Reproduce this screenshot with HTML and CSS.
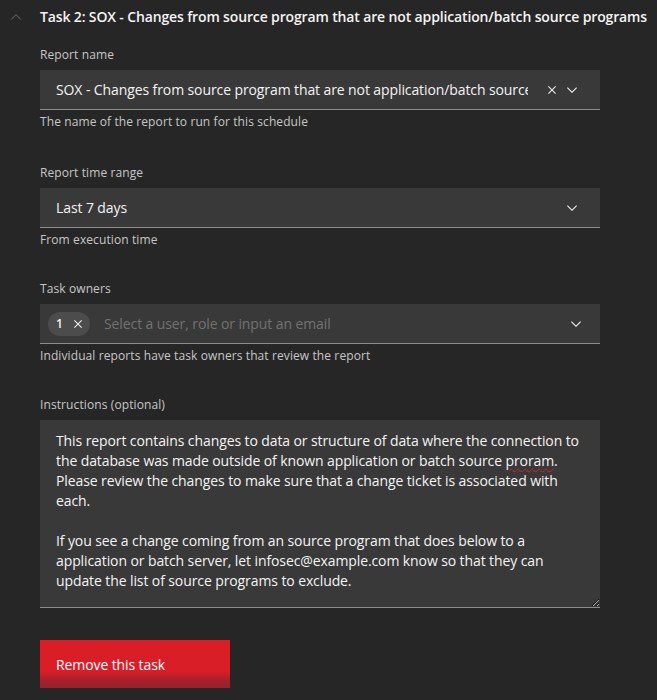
FILE: index.html
```html
<!DOCTYPE html>
<html lang="en">
<head>
<meta charset="utf-8">
<title>Task 2</title>
<link rel="stylesheet" href="styles.css">
</head>
<body>
<section class="accordion">
  <div class="accordion-heading">
    <svg class="accordion-arrow" width="16" height="16" viewBox="0 0 16 16"><path d="M8 5L13 10 12.3 10.7 8 6.4 3.7 10.7 3 10z" fill="currentColor"/></svg>
    <h2 class="accordion-title">Task 2: SOX - Changes from source program that are not application/batch source programs</h2>
  </div>
  <div class="accordion-content">
    <div class="field field-first">
      <div class="label">Report name</div>
      <div class="control select select-clearable">
        <span class="value">SOX - Changes from source program that are not application/batch source programs</span>
        <svg class="icon" width="16" height="16" viewBox="0 0 16 16"><path d="M12 4.7L11.3 4 8 7.3 4.7 4 4 4.7 7.3 8 4 11.3 4.7 12 8 8.7 11.3 12 12 11.3 8.7 8z" fill="currentColor"/></svg>
        <svg class="icon chevron" width="16" height="16" viewBox="0 0 16 16"><path d="M8 11L3 6 3.7 5.3 8 9.6 12.3 5.3 13 6z" fill="currentColor"/></svg>
      </div>
      <div class="helper">The name of the report to run for this schedule</div>
    </div>

    <div class="field">
      <div class="label">Report time range</div>
      <div class="control select">
        <span class="value">Last 7 days</span>
        <svg class="icon chevron" width="16" height="16" viewBox="0 0 16 16"><path d="M8 11L3 6 3.7 5.3 8 9.6 12.3 5.3 13 6z" fill="currentColor"/></svg>
      </div>
      <div class="helper">From execution time</div>
    </div>

    <div class="field">
      <div class="label">Task owners</div>
      <div class="control multiselect">
        <span class="tag">
          <span class="tag-count">1</span>
          <svg class="tag-close" width="16" height="16" viewBox="0 0 16 16"><path d="M12 4.7L11.3 4 8 7.3 4.7 4 4 4.7 7.3 8 4 11.3 4.7 12 8 8.7 11.3 12 12 11.3 8.7 8z" fill="currentColor"/></svg>
        </span>
        <span class="placeholder">Select a user, role or input an email</span>
        <svg class="icon chevron" width="16" height="16" viewBox="0 0 16 16"><path d="M8 11L3 6 3.7 5.3 8 9.6 12.3 5.3 13 6z" fill="currentColor"/></svg>
      </div>
      <div class="helper">Individual reports have task owners that review the report</div>
    </div>

    <div class="field">
      <div class="label">Instructions (optional)</div>
      <div class="control textarea"><p>This report contains changes to data or structure of data where the connection to the database was made outside of known application or batch source <span class="misspelled">proram</span>. Please review the changes to make sure that a change ticket is associated with each.</p><p>If you see a change coming from an source program that does below to a application or batch server, let infosec@example.com know so that they can update the list of source programs to exclude.</p></div>
    </div>

    <button class="btn-danger" type="button">Remove this task</button>
  </div>
</section>
</body>
</html>
```
FILE: styles.css
```css
* { box-sizing: border-box; }

body {
  margin: 0;
  background: #262626;
  color: #f4f4f4;
  font-family: "Open Sans", "Noto Sans", sans-serif;
  height: 700px;
  overflow: hidden;
}

.accordion-heading {
  display: flex;
  align-items: flex-start;
  height: 34px;
  padding-top: 7px;
}

.accordion-arrow {
  color: #5c5c5c;
  margin: 2px 16px 0 8px;
  flex: none;
}

.accordion-title {
  margin: 0;
  font-size: 14px;
  font-weight: 600;
  line-height: 20px;
  letter-spacing: -0.14px;
  white-space: nowrap;
  color: #f4f4f4;
}

.accordion-content {
  padding: 12px 0 0 40px;
  width: 600px;
}

.field {
  margin-bottom: 32px;
}

.field-first {
  margin-bottom: 34px;
}

.label {
  font-size: 12px;
  line-height: 16px;
  letter-spacing: 0.1px;
  color: #c6c6c6;
  padding-top: 1px;
  margin-bottom: 7px;
}

.helper {
  font-size: 12px;
  line-height: 16px;
  letter-spacing: 0.1px;
  color: #c6c6c6;
  margin-top: 4px;
}

.control {
  background: #393939;
  border-bottom: 1px solid #8d8d8d;
  font-size: 14px;
  letter-spacing: -0.1px;
}

.select,
.multiselect {
  display: flex;
  align-items: center;
  height: 40px;
}

.select {
  padding: 0 20px 0 16px;
}

.value {
  flex: 1;
  overflow: hidden;
  white-space: nowrap;
  color: #f4f4f4;
  line-height: 20px;
}

.select-clearable .value {
  margin-right: 16px;
}

.icon {
  flex: none;
  color: #f4f4f4;
}

.select-clearable .chevron {
  margin-left: 4px;
}

.multiselect {
  padding: 0 16px 0 8px;
}

.tag {
  display: flex;
  align-items: center;
  height: 24px;
  width: 42px;
  padding: 0 4px 0 8px;
  border-radius: 12px;
  background: #4c4c4c;
  flex: none;
}

.tag-count {
  font-size: 12px;
  font-weight: 600;
  line-height: 16px;
  width: 14px;
  color: #f4f4f4;
}

.tag-close {
  color: #f4f4f4;
}

.placeholder {
  flex: 1;
  margin-left: 14px;
  color: #727272;
  line-height: 20px;
  white-space: nowrap;
}

.textarea {
  height: 188px;
  padding: 11px 16px;
  line-height: 20px;
  color: #f4f4f4;
  overflow: auto;
  resize: vertical;
}

.textarea p {
  margin: 0 0 20px;
}

.misspelled {
  text-decoration: underline wavy #da1e28;
  text-decoration-thickness: 1px;
  text-underline-offset: 2px;
}

.btn-danger {
  display: block;
  width: 190px;
  height: 48px;
  margin-top: 1px;
  padding: 0 16px;
  border: 0;
  text-align: left;
  font-family: inherit;
  font-size: 14px;
  letter-spacing: -0.1px;
  color: #ffffff;
  background: linear-gradient(to bottom, #da1e28 0, #da1e28 31px, #a6212a 40px, #9a2029 100%);
}
```
